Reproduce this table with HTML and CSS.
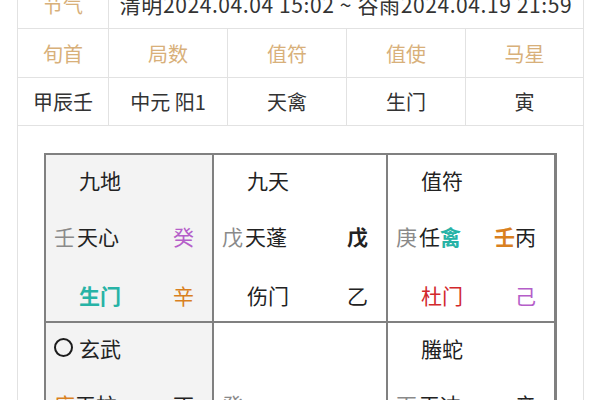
FILE: index.html
```html
<!DOCTYPE html>
<html lang="zh">
<head>
<meta charset="utf-8">
<link rel="stylesheet" href="styles.css">
</head>
<body>
<div class="panel">
  <div class="info">
    <div class="cell head">节气</div>
    <div class="cell wide">清明2024.04.04 15:02 ~ 谷雨2024.04.19 21:59</div>
    <div class="cell head">旬首</div>
    <div class="cell head">局数</div>
    <div class="cell head">值符</div>
    <div class="cell head">值使</div>
    <div class="cell head">马星</div>
    <div class="cell">甲辰壬</div>
    <div class="cell">中元 阳1</div>
    <div class="cell">天禽</div>
    <div class="cell">生门</div>
    <div class="cell">寅</div>
  </div>
  <div class="board">
    <div class="palace">
      <div class="line top">九地</div>
      <div class="line mid"><span><span class="dim">壬</span>天心</span><span class="purple">癸</span></div>
      <div class="line bot"><span class="teal b">生门</span><span class="orange">辛</span></div>
    </div>
    <div class="palace white">
      <div class="line top">九天</div>
      <div class="line mid"><span><span class="dim">戊</span>天蓬</span><span class="b">戊</span></div>
      <div class="line bot"><span>伤门</span><span>乙</span></div>
    </div>
    <div class="palace white">
      <div class="line top">值符</div>
      <div class="line mid"><span><span class="dim">庚</span>任<span class="teal b">禽</span></span><span><span class="orange b">壬</span>丙</span></div>
      <div class="line bot"><span class="red">杜门</span><span class="purple">己</span></div>
    </div>
    <div class="palace">
      <div class="line top ringed"><span class="ring"></span>玄武</div>
      <div class="line mid"><span><span class="orange">庚</span>天柱</span><span>丁</span></div>
      <div class="line bot"><span>景门</span><span>庚</span></div>
    </div>
    <div class="palace white">
      <div class="line top"></div>
      <div class="line mid"><span><span class="dim">癸</span></span><span></span></div>
      <div class="line bot"></div>
    </div>
    <div class="palace white">
      <div class="line top">螣蛇</div>
      <div class="line mid"><span><span class="dim">丙</span>天冲</span><span>辛</span></div>
      <div class="line bot"><span>休门</span><span>丙</span></div>
    </div>
  </div>
</div>
</body>
</html>
```
FILE: styles.css
```css
* { box-sizing: border-box; }
html, body { margin: 0; padding: 0; background: #ffffff; }
body {
  font-family: "Noto Sans CJK SC", "Noto Sans", sans-serif;
  color: #333333;
  overflow: hidden;
  height: 400px;
}
.panel {
  width: 567px;
  margin: -21px 0 0 17px;
  border: 1px solid #e2e2e2;
  background: #ffffff;
}
.info {
  display: grid;
  grid-template-columns: 90px 118px 118px 118px 117px;
  grid-template-rows: 48px 48px 47px;
  gap: 1px;
  background: #e2e2e2;
  border-bottom: 1px solid #e2e2e2;
}
.cell {
  background: #ffffff;
  display: flex;
  align-items: center;
  justify-content: center;
  font-size: 20px;
  color: #333333;
}
.head { color: #d8b07a; }
.wide {
  grid-column: span 4;
  font-size: 21px;
  letter-spacing: 0.6px;
}
.board {
  margin: 27px 26px 0 26px;
  display: grid;
  grid-template-columns: 166px 172px 166px;
  grid-template-rows: 166px 166px;
  gap: 2px;
  padding: 2px;
  background: #808080;
}
.palace {
  background: #f3f3f3;
  display: grid;
  grid-template-rows: 49px 64px 53px;
  font-size: 21px;
  color: #222222;
}
.palace.white { background: #ffffff; }
.line {
  display: flex;
  align-items: center;
}
.top { padding-left: 33px; }
.top.ringed { padding-left: 8px; }
.mid {
  justify-content: space-between;
  padding: 0 18px 0 8px;
}
.bot {
  justify-content: space-between;
  padding: 0 18px 0 33px;
}
.ring {
  display: inline-block;
  width: 19px;
  height: 19px;
  border: 2px solid #1c1c1c;
  border-radius: 50%;
  margin-right: 6px;
}
.dim { color: #8a8a8a; margin-right: 2px; }
.b { font-weight: 700; }
.teal { color: #27b3a6; }
.orange { color: #d9801f; }
.purple { color: #b55ec9; }
.red { color: #d2282c; }
```
